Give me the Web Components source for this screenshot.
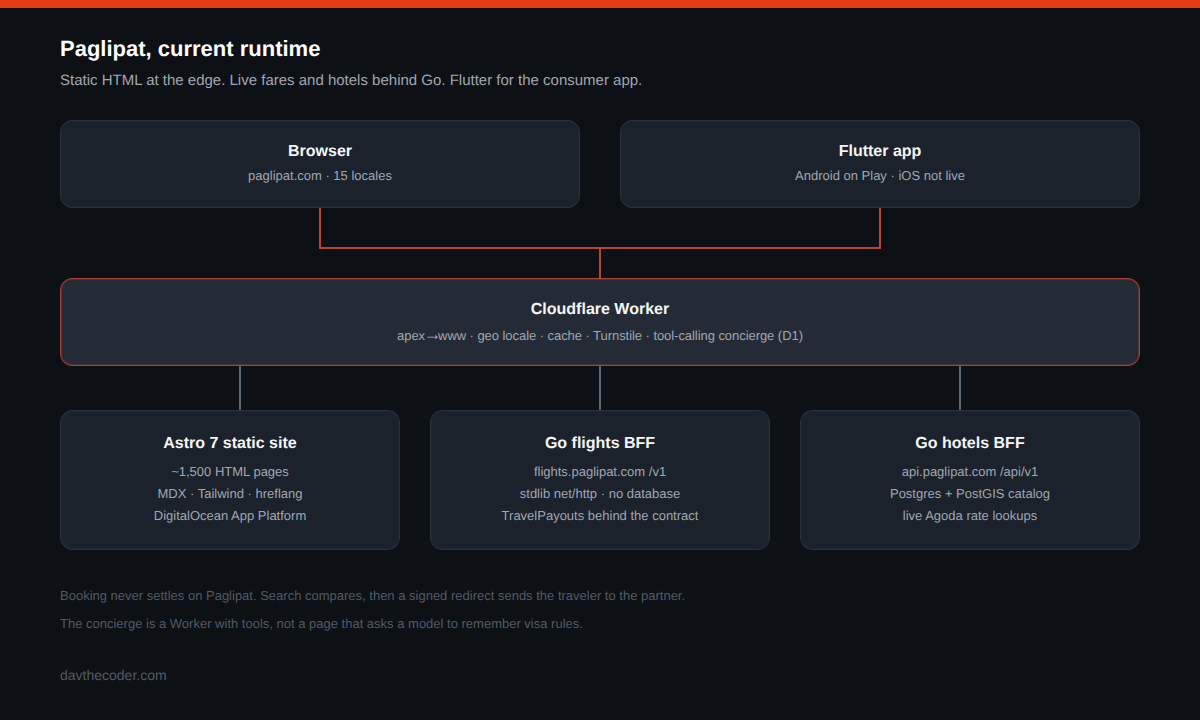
<!doctype html>
<html><head><meta charset="utf-8"><style>
html,body{margin:0;padding:0;background:#0d1014}
body{width:1200px;height:720px;overflow:hidden;font-family:"Liberation Sans",Arial,sans-serif;text-rendering:geometricPrecision}
</style></head><body>
<rt-page>
<rt-head slot="head" title-text="Paglipat, current runtime" sub="Static HTML at the edge. Live fares and hotels behind Go. Flutter for the consumer app."></rt-head>
<rt-row style="--gap:40px">
  <rt-card name="Browser" style="--h:88px;--pt:20px;--tm:1.5px"><div>paglipat.com · 15 locales</div></rt-card>
  <rt-card name="Flutter app" style="--h:88px;--pt:20px;--tm:1.5px"><div>Android on Play · iOS not live</div></rt-card>
</rt-row>
<rt-link kind="merge"></rt-link>
<rt-row>
  <rt-card name="Cloudflare Worker" accent style="--h:88px;--pt:20px;--tm:3.5px"><div style="letter-spacing:-.055px">apex<span style="font-size:18px;line-height:0;letter-spacing:-3.5px;margin-left:-1.5px">→</span>www · geo locale · cache · Turnstile · tool-calling concierge (D1)</div></rt-card>
</rt-row>
<rt-link kind="split"></rt-link>
<rt-row style="--gap:30px">
  <rt-card name="Astro 7 static site" style="--h:140px;--pt:22px;--tm:5.5px"><div>~1,500 HTML pages</div><div>MDX · Tailwind · hreflang</div><div>DigitalOcean App Platform</div></rt-card>
  <rt-card name="Go flights BFF" style="--h:140px;--pt:22px;--tm:5.5px"><div>flights.paglipat.com /v1</div><div>stdlib net/http · no database</div><div>TravelPayouts behind the contract</div></rt-card>
  <rt-card name="Go hotels BFF" style="--h:140px;--pt:22px;--tm:5.5px"><div>api.paglipat.com /api/v1</div><div>Postgres + PostGIS catalog</div><div>live Agoda rate lookups</div></rt-card>
</rt-row>
<rt-notes>
  <div>Booking never settles on Paglipat. Search compares, then a signed redirect sends the traveler to the partner.</div>
  <div>The concierge is a Worker with tools, not a page that asks a model to remember visa rules.</div>
</rt-notes>
<rt-site>davthecoder.com</rt-site>
</rt-page>
<script>
function def(name, html, init){
  customElements.define(name, class extends HTMLElement{
    constructor(){super();this.attachShadow({mode:'open'}).innerHTML=html;}
    connectedCallback(){ if(init) init(this); }
  });
}
def('rt-page',`<style>:host{display:block;width:1200px;height:720px;box-sizing:border-box;background:#0d1014;border-top:8px solid #e63a17;padding:0 60px}</style><slot name="head"></slot><slot></slot>`);
def('rt-head',`<style>:host{display:block;height:112px;padding-top:27px;box-sizing:border-box}
h1{margin:0;font-size:22px;line-height:28px;font-weight:700;color:#fff}
p{margin:8px 0 0;font-size:15px;line-height:20px;color:#a0a7b2}</style><h1></h1><p></p>`,el=>{
  el.shadowRoot.querySelector('h1').textContent=el.getAttribute('title-text');
  el.shadowRoot.querySelector('p').textContent=el.getAttribute('sub');
});
def('rt-row',`<style>:host{display:flex;gap:var(--gap,0)}::slotted(*){flex:1 1 0}</style><slot></slot>`);
def('rt-card',`<style>:host{display:flex;flex-direction:column;align-items:center;box-sizing:border-box;height:var(--h);background:#1b222c;border:1px solid #28303b;box-shadow:inset 0 0 0 1px #202732;border-radius:12px;color:#a0a7b2;font-size:13px;line-height:22px;text-align:center;padding-top:var(--pt)}
:host([accent]){background:#252b36;border-color:#a8402f;box-shadow:inset 0 0 0 1px rgba(168,64,47,.35)}
h2{margin:0 0 var(--tm);font-size:16px;line-height:22px;font-weight:700;color:#f4f6f8}
</style><h2></h2><slot></slot>`,el=>{el.shadowRoot.querySelector('h2').textContent=el.getAttribute('name');});
def('rt-link',`<style>:host{display:block}svg{display:block;width:1080px}</style><svg fill="none" stroke-width="2"></svg>`,el=>{
  const s=el.shadowRoot.querySelector('svg');
  if(el.getAttribute('kind')==='merge'){
    s.setAttribute('height',70);s.setAttribute('viewBox','0 0 1080 70');
    s.innerHTML='<path d="M260 0V40H820V0M540 40V70" stroke="#b8432f"/>';
  }else{
    s.setAttribute('height',44);s.setAttribute('viewBox','0 0 1080 44');
    s.innerHTML='<path d="M180 0V44M540 0V44M900 0V44" stroke="#5b6875"/>';
  }
});
def('rt-notes',`<style>:host{display:block;padding-top:32px;font-size:13px;line-height:28px;color:#515b68}</style><slot></slot>`);
def('rt-site',`<style>:host{display:block;margin-top:26px;font-size:14px;line-height:22px;color:#515b68}</style><slot></slot>`);
</script>
</body></html>
